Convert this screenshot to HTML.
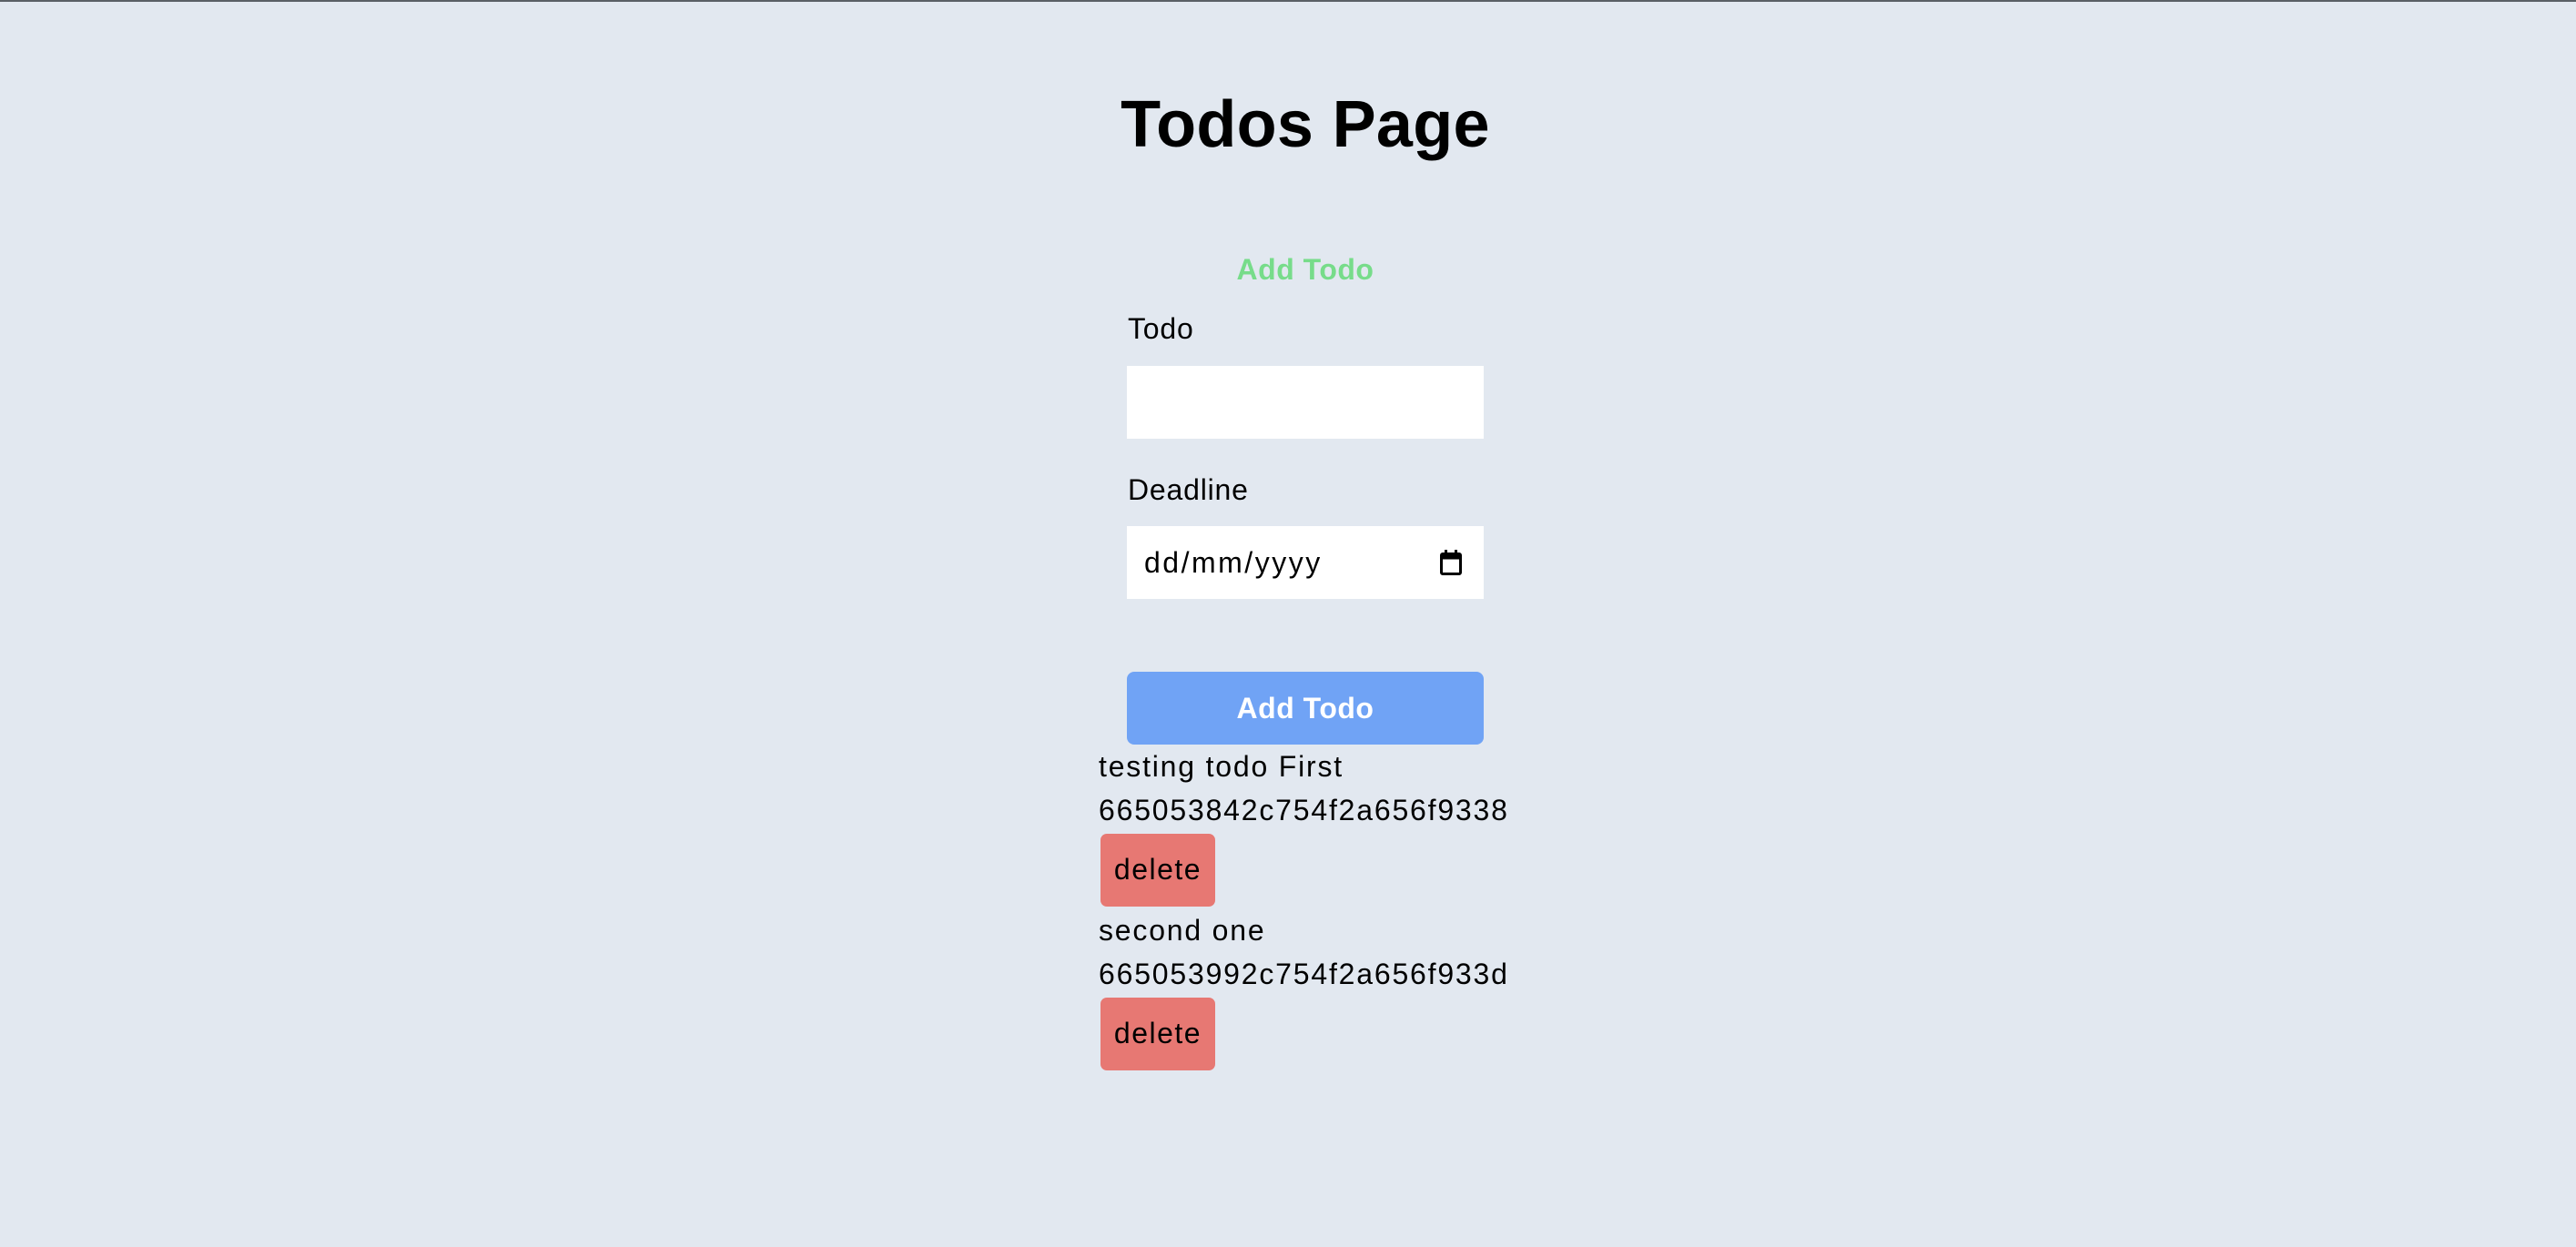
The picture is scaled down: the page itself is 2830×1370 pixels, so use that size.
<!DOCTYPE html>
<html><head><meta charset="utf-8"><style>
html,body{margin:0;padding:0}
body{width:2830px;height:1370px;background:#e2e8f0;position:relative;overflow:hidden;font-family:"Liberation Sans",sans-serif;color:#000}
.top{position:absolute;left:0;top:0;width:2830px;height:2px;background:#5a5f66}
.a{position:absolute;white-space:nowrap}
h1{position:absolute;margin:0;left:0;width:2868px;text-align:center;top:92px;font-size:72px;line-height:90px;font-weight:bold;letter-spacing:0.3px}
.green{left:0;width:2868px;text-align:center;top:276px;font-size:32px;line-height:40px;font-weight:bold;color:#77dc8a;letter-spacing:0.5px}
.lbl{left:1239px;font-size:32px;line-height:40px;letter-spacing:0.8px}
.inp{position:absolute;left:1238px;width:392px;background:#fff}
.btn{position:absolute;left:1238px;top:738px;width:392px;height:80px;background:#70a3f5;border-radius:8px;color:#fff;font-weight:bold;font-size:32px;line-height:80px;text-align:center;letter-spacing:0.5px}
.t{left:1207px;font-size:32px;line-height:48px;letter-spacing:1.8px}
.del{position:absolute;left:1209px;width:126px;height:80px;background:#e77873;border-radius:7px;font-size:32px;line-height:78px;text-align:center;letter-spacing:1.5px}
</style></head><body>
<div class="top"></div>
<h1>Todos Page</h1>
<div class="a green">Add Todo</div>
<div class="a lbl" style="top:341px">Todo</div>
<div class="inp" style="top:402px;height:80px"></div>
<div class="a lbl" style="top:518px">Deadline</div>
<div class="inp" style="top:578px;height:80px">
<span class="a" style="left:19px;top:20px;font-size:32px;line-height:40px;letter-spacing:2.5px">dd/mm/yyyy</span>
<svg class="a" style="left:344px;top:25px" width="24" height="29" viewBox="0 0 24 29"><rect x="1.5" y="5.5" width="21" height="22" rx="1.5" fill="none" stroke="#000" stroke-width="3"/><rect x="1.5" y="5.5" width="21" height="6" fill="#000"/><rect x="5" y="1" width="3" height="5" fill="#000"/><rect x="16" y="1" width="3" height="5" fill="#000"/></svg>
</div>
<div class="btn">Add Todo</div>
<div class="a t" style="top:818px">testing todo First</div>
<div class="a t" style="top:866px">665053842c754f2a656f9338</div>
<div class="del" style="top:916px">delete</div>
<div class="a t" style="top:998px">second one</div>
<div class="a t" style="top:1046px">665053992c754f2a656f933d</div>
<div class="del" style="top:1096px">delete</div>
</body></html>
